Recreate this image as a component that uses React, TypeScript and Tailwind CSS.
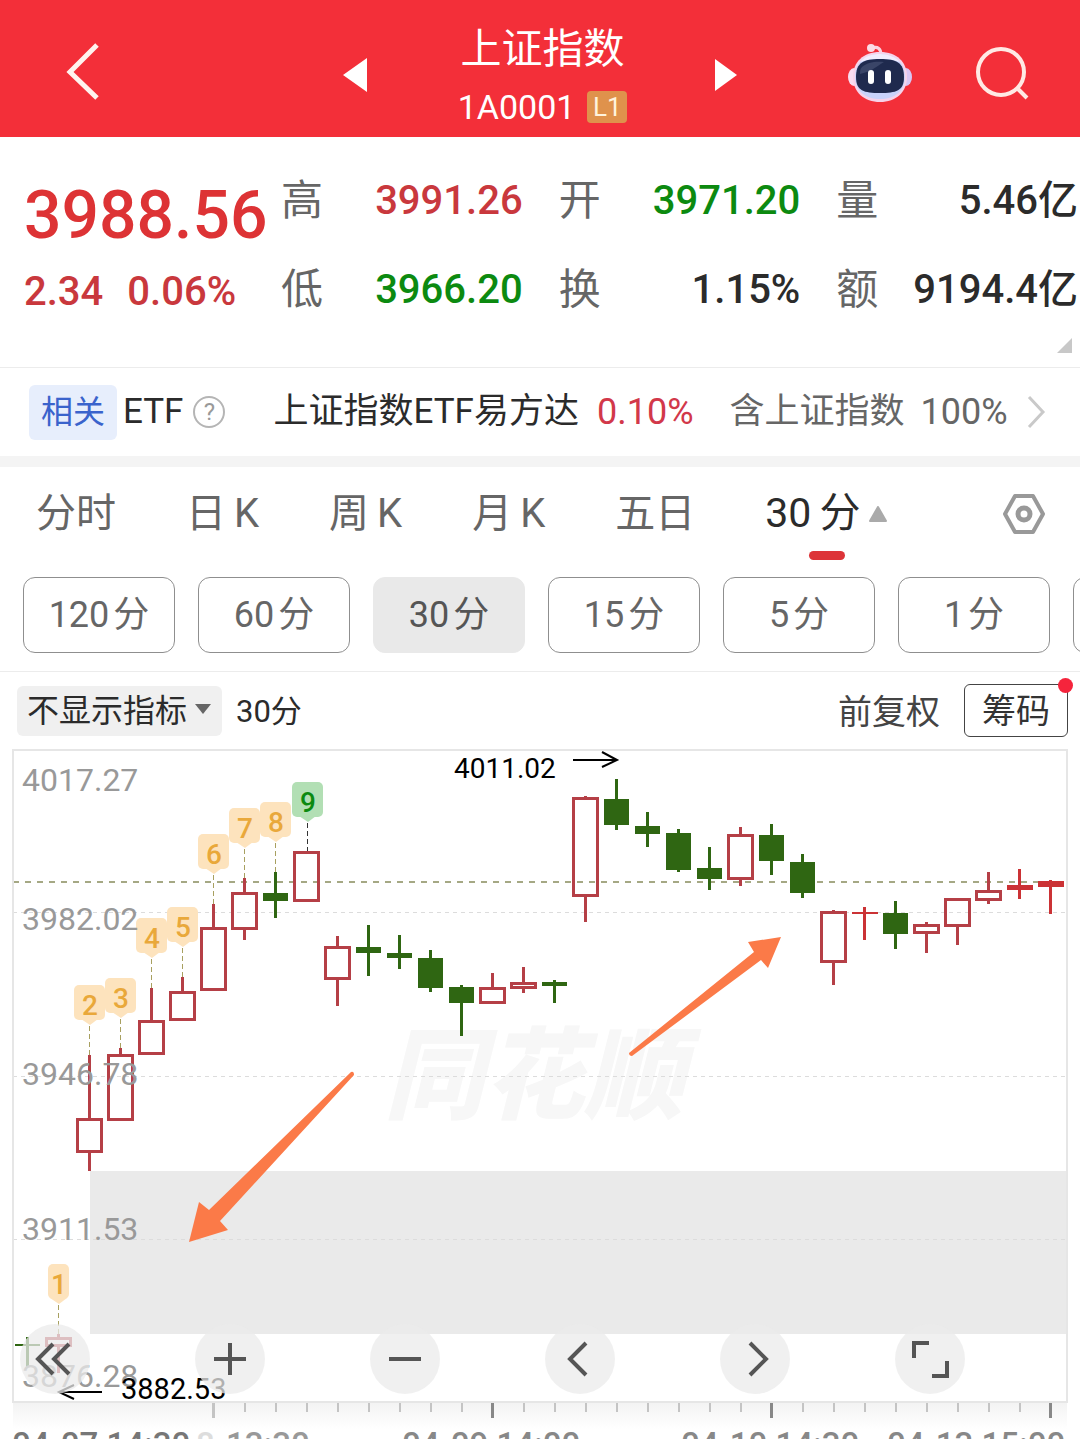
import React, { useState } from 'react';

interface Candle {
  x: number;
  high: number;
  top: number;
  bottom: number;
  low: number;
  kind: 'up' | 'down' | 'flat'; // flat = solid red body
}

interface Marker {
  n: number;
  x: number;
  y: number;
  end: number; // where the dashed leader meets the candle
}

const RED = '#b53f46';
const GREEN = '#2f6612';

const candles: Candle[] = [
  { x: 27, high: 1337, top: 1344, bottom: 1346, low: 1367, kind: 'down' },
  { x: 58, high: 1334, top: 1337, bottom: 1347, low: 1373, kind: 'up' },
  { x: 89, high: 1055, top: 1118, bottom: 1153, low: 1171, kind: 'up' },
  { x: 120, high: 1048, top: 1054, bottom: 1121, low: 1121, kind: 'up' },
  { x: 151, high: 988, top: 1020, bottom: 1055, low: 1055, kind: 'up' },
  { x: 182, high: 977, top: 991, bottom: 1021, low: 1021, kind: 'up' },
  { x: 213, high: 904, top: 927, bottom: 991, low: 991, kind: 'up' },
  { x: 244, high: 878, top: 892, bottom: 930, low: 940, kind: 'up' },
  { x: 275, high: 872, top: 893, bottom: 901, low: 918, kind: 'down' },
  { x: 306, high: 851, top: 851, bottom: 902, low: 902, kind: 'up' },
  { x: 337, high: 936, top: 946, bottom: 980, low: 1006, kind: 'up' },
  { x: 368, high: 925, top: 947, bottom: 953, low: 976, kind: 'down' },
  { x: 399, high: 935, top: 953, bottom: 958, low: 969, kind: 'down' },
  { x: 430, high: 950, top: 958, bottom: 988, low: 992, kind: 'down' },
  { x: 461, high: 985, top: 987, bottom: 1003, low: 1036, kind: 'down' },
  { x: 492, high: 973, top: 987, bottom: 1004, low: 1004, kind: 'up' },
  { x: 523, high: 967, top: 982, bottom: 989, low: 993, kind: 'up' },
  { x: 554, high: 980, top: 982, bottom: 986, low: 1003, kind: 'down' },
  { x: 585, high: 796, top: 797, bottom: 897, low: 922, kind: 'up' },
  { x: 616, high: 779, top: 799, bottom: 825, low: 830, kind: 'down' },
  { x: 647, high: 812, top: 826, bottom: 834, low: 847, kind: 'down' },
  { x: 678, high: 829, top: 833, bottom: 870, low: 872, kind: 'down' },
  { x: 709, high: 847, top: 868, bottom: 879, low: 890, kind: 'down' },
  { x: 740, high: 827, top: 834, bottom: 880, low: 886, kind: 'up' },
  { x: 771, high: 824, top: 835, bottom: 861, low: 875, kind: 'down' },
  { x: 802, high: 854, top: 862, bottom: 893, low: 898, kind: 'down' },
  { x: 833, high: 910, top: 911, bottom: 963, low: 985, kind: 'up' },
  { x: 864, high: 907, top: 912, bottom: 914, low: 940, kind: 'flat' },
  { x: 895, high: 901, top: 913, bottom: 934, low: 949, kind: 'down' },
  { x: 926, high: 922, top: 924, bottom: 934, low: 953, kind: 'up' },
  { x: 957, high: 898, top: 898, bottom: 927, low: 945, kind: 'up' },
  { x: 988, high: 872, top: 890, bottom: 901, low: 904, kind: 'up' },
  { x: 1019, high: 869, top: 885, bottom: 890, low: 899, kind: 'flat' },
  { x: 1050, high: 880, top: 881, bottom: 887, low: 914, kind: 'flat' },
];

const markers: Marker[] = [
  { n: 1, x: 58, y: 1264, end: 1334 },
  { n: 2, x: 89, y: 985, end: 1055 },
  { n: 3, x: 120, y: 978, end: 1048 },
  { n: 4, x: 151, y: 918, end: 988 },
  { n: 5, x: 182, y: 907, end: 977 },
  { n: 6, x: 213, y: 834, end: 904 },
  { n: 7, x: 244, y: 808, end: 878 },
  { n: 8, x: 275, y: 802, end: 872 },
  { n: 9, x: 307, y: 782, end: 851 },
];

const priceLabels = [
  { text: '4017.27', y: 791 },
  { text: '3982.02', y: 930 },
  { text: '3946.78', y: 1085 },
  { text: '3911.53', y: 1240 },
  { text: '3876.28', y: 1387 },
];

const dateLabels = [
  { text: '04-07 14:30', x: 12, color: '#777' },
  { text: '04-09 14:00', x: 402, color: '#888' },
  { text: '04-10 14:30', x: 681, color: '#888' },
  { text: '04-13 15:00', x: 887, color: '#888' },
];

const stats = [
  { label: '高', value: '3991.26', color: 'text-[#c9383d]' },
  { label: '开', value: '3971.20', color: 'text-[#0c8a10]' },
  { label: '量', value: '5.46亿', color: 'text-[#2b2b2b]' },
  { label: '低', value: '3966.20', color: 'text-[#0c8a10]' },
  { label: '换', value: '1.15%', color: 'text-[#2b2b2b]' },
  { label: '额', value: '9194.4亿', color: 'text-[#2b2b2b]' },
];

const tabs = [['分时'], ['日', 'K'], ['周', 'K'], ['月', 'K'], ['五日']];
const periods = ['120', '60', '30', '15', '5', '1'];

const Header: React.FC = () => (
  <header className="grid h-[137px] grid-cols-[1fr_auto_1fr] items-center bg-[#f32f39] px-[51px] text-white">
    <button type="button" aria-label="返回" className="justify-self-start pt-1 pl-[14px]">
      <svg width="36" height="58" viewBox="0 0 36 58" fill="none" stroke="#fff3ee" strokeWidth="5">
        <path d="M32 3 5 30 32 56" />
      </svg>
    </button>
    <div className="flex items-center">
      <button type="button" aria-label="上一个" className="mr-[91px]">
        <svg width="24" height="34" viewBox="0 0 24 34" className="mt-3">
          <path d="M24 0v34L0 17z" fill="#fff" />
        </svg>
      </button>
      <div className="flex flex-col items-center pt-4">
        <h1 className="text-[41px] leading-[60px]">上证指数</h1>
        <div className="flex items-center gap-3 leading-[56px]">
          <span className="text-[34px]">1A0001</span>
          <span className="h-8 w-10 rounded-sm bg-[#df924c] text-center text-[26px] leading-8 text-[#fff3dc]">L1</span>
        </div>
      </div>
      <button type="button" aria-label="下一个" className="ml-[88px]">
        <svg width="22" height="32" viewBox="0 0 22 32" className="mt-3">
          <path d="M0 0v32l22-16z" fill="#fff" />
        </svg>
      </button>
    </div>
    <div className="flex items-center gap-[63px] justify-self-end pt-2">
      <button type="button" aria-label="智能助手">
        <svg width="64" height="60" viewBox="0 0 64 60">
          <path d="M24 5c6-2 9 1 9 7" fill="none" stroke="#fbd3e0" strokeWidth="3" />
          <circle cx="23" cy="5" r="4" fill="#fbdce6" />
          <ellipse cx="6" cy="34" rx="6" ry="9" fill="#f9dcf0" />
          <ellipse cx="58" cy="34" rx="6" ry="9" fill="#d9c6f4" />
          <path d="M32 9c17 0 27 10 27 25S48 59 32 59 5 49 5 34 15 9 32 9z" fill="#f6d3ea" />
          <path d="M32 11c15 0 25 9 25 23S47 56 32 56 7 48 7 34s10-23 25-23z" fill="#c9d3fb" />
          <path d="M12 19c5-6 12-8 20-8s16 3 20 8c-12-4-28-4-40 0z" fill="#f1edfd" />
          <path d="M32 16c17 0 24 4 24 18S48 50 32 50 8 48 8 34s7-18 24-18z" fill="#1f2a4e" />
          <path d="M14 24c5-5 14-6 22-5-8 5-14 10-24 12 0-3 0-5 2-7z" fill="#3a4568" />
          <rect x="20" y="27" width="6" height="14" rx="3" fill="#fff" />
          <rect x="37" y="27" width="6" height="14" rx="3" fill="#fff" />
        </svg>
      </button>
      <button type="button" aria-label="搜索">
        <svg width="54" height="54" viewBox="0 0 54 54" fill="none" stroke="#ffe9e4" strokeWidth="4">
          <circle cx="26" cy="26" r="23" />
          <path d="M43 43l9 9" />
        </svg>
      </button>
    </div>
  </header>
);

const Quote: React.FC = () => (
  <section className="flex h-[231px] flex-col border-b border-[#ececec] pt-[19px]">
    <div className="flex pr-[2px]">
      <div className="w-[281px] shrink-0 pl-6 font-medium">
        <p className="mt-6 text-[66px] leading-[72px] text-[#dd3335]">3988.56</p>
        <p className="mt-5 flex gap-6 text-[40px] leading-10 text-[#c9383d]">
          <span>2.34</span>
          <span>0.06%</span>
        </p>
      </div>
      <dl className="grid flex-1 grid-cols-3 gap-x-9">
        {stats.map((s) => (
          <div key={s.label} className="flex h-[89px] items-center justify-between">
            <dt className="text-[42px] text-[#666]">{s.label}</dt>
            <dd className={`whitespace-nowrap text-[40px] font-medium ${s.color}`}>{s.value}</dd>
          </div>
        ))}
      </dl>
    </div>
    <svg width="15" height="15" viewBox="0 0 15 15" className="mt-1 mr-2 self-end">
      <path d="M15 0v15H0z" fill="#c8c8c8" />
    </svg>
  </section>
);

const RelatedEtf: React.FC = () => (
  <a href="#etf" className="flex h-[88px] items-center pl-[29px] whitespace-nowrap text-[35px] text-[#2b2b2b]">
    <span className="h-[55px] w-[88px] rounded-md bg-[#e7eefc] text-center text-[32px] leading-[55px] text-[#3a63cc]">相关</span>
    <span className="ml-[6px]">ETF</span>
    <span className="ml-[10px] flex h-8 w-8 items-center justify-center rounded-full border-2 border-[#b5b5b5] text-[24px] text-[#999]">?</span>
    <span className="ml-12">上证指数ETF易方达</span>
    <span className="ml-[18px] text-[36px] text-[#d2384a]">0.10%</span>
    <span className="ml-9 text-[#666]">含上证指数</span>
    <span className="ml-4 text-[36px] text-[#666]">100%</span>
    <svg width="20" height="34" viewBox="0 0 20 34" fill="none" stroke="#c9c9c9" strokeWidth="3" className="ml-[18px]">
      <path d="M3 2l14 15L3 32" />
    </svg>
  </a>
);

const PeriodTabs: React.FC = () => {
  const [period, setPeriod] = useState('30');

  return (
    <section className="border-t-[11px] border-[#f4f4f4]">
      <nav className="mb-4 flex h-[94px] items-center pr-[35px] pl-9 text-[40px] text-[#666]">
        <div className="flex h-full gap-[70px]">
          {tabs.map((parts) => (
            <button key={parts.join('')} type="button" className="flex items-center gap-2">
              {parts.map((p) => (
                <span key={p}>{p}</span>
              ))}
            </button>
          ))}
          <button type="button" className="relative flex items-center gap-2 text-[#2b2b2b]">
            <span className="text-[41px]">30</span>
            <span className="text-[41px]">分</span>
            <svg width="20" height="17" viewBox="0 0 20 17">
              <path d="M10 1l8 14H2z" fill="#aaa" stroke="#aaa" strokeWidth="2" strokeLinejoin="round" />
            </svg>
            <span className="absolute bottom-px left-1/2 h-[9px] w-9 -translate-x-1/2 rounded-full bg-[#dd3438]" />
          </button>
        </div>
        <button type="button" aria-label="设置" className="ml-auto">
          <svg width="42" height="42" viewBox="0 0 42 42" fill="none" stroke="#999" strokeWidth="4" strokeLinejoin="round">
            <path d="M12 3h18l10 18-10 18H12L2 21z" />
            <circle cx="21" cy="21" r="6" strokeWidth="5" />
          </svg>
        </button>
      </nav>
      <div className="flex gap-[23px] overflow-hidden border-b border-[#ececec] pb-[18px] pl-[23px] text-[36px] text-[#666]">
        {periods.map((p) => (
          <button
            key={p}
            type="button"
            onClick={() => setPeriod(p)}
            className={`flex h-[76px] w-[152px] shrink-0 items-center justify-center gap-1 rounded-xl border ${
              p === period ? 'border-[#e9e9e9] bg-[#e9e9e9] text-[#555]' : 'border-[#8f8f8f]'
            }`}
          >
            <span>{p}</span>
            <span>分</span>
          </button>
        ))}
        <button type="button" aria-label="更多周期" className="h-[76px] w-[152px] shrink-0 rounded-xl border border-[#8f8f8f]" />
      </div>
    </section>
  );
};

const Toolbar: React.FC = () => (
  <div className="flex h-[76px] items-center pr-3 pl-[17px] text-[34px] text-[#333]">
    <div className="relative">
      <select
        aria-label="指标"
        className="h-[50px] w-[205px] appearance-none rounded-md bg-[#f0f0f0] pl-[10px] text-[32px] leading-[50px] text-[#2b2b2b]"
      >
        <option>不显示指标</option>
      </select>
      <svg width="18" height="12" viewBox="0 0 18 12" className="pointer-events-none absolute top-[18px] right-[10px]">
        <path d="M1 1h16l-8 10z" fill="#666" />
      </svg>
    </div>
    <span className="ml-[14px] pt-1 text-[31px] text-[#2b2b2b]">30分</span>
    <button type="button" className="ml-auto pt-1 text-[#444]">前复权</button>
    <button type="button" className="relative ml-6 h-[53px] w-[104px] rounded-md border border-[#444] leading-[53px]">
      筹码
      <span className="absolute -top-[7px] -right-[6px] h-[15px] w-[15px] rounded-full bg-[#f5243c]" />
    </button>
  </div>
);

const CandleShape: React.FC<{ c: Candle }> = ({ c }) => {
  if (c.kind === 'up') {
    return (
      <g stroke={RED} strokeWidth="3" fill="none">
        <path d={`M${c.x + 0.5} ${c.high}V${c.top + 1}M${c.x + 0.5} ${c.bottom - 1}V${c.low}`} />
        <rect x={c.x - 11.5} y={c.top + 1.5} width="24" height={c.bottom - c.top - 3} />
      </g>
    );
  }
  const color = c.kind === 'down' ? GREEN : '#cb3235';
  return (
    <g fill={color}>
      <rect x={c.x - 1} y={c.high} width="3" height={c.low - c.high} />
      <rect x={c.x - 12} y={c.top} width={c.kind === 'flat' ? 26 : 25} height={c.bottom - c.top} />
    </g>
  );
};

const MarkerShape: React.FC<{ m: Marker }> = ({ m }) => {
  const half = m.n === 1 ? 10 : 15;
  const last = m.n === 9;
  return (
    <g>
      <path d={`M${m.x + 0.5} ${m.y + 41}V${m.end}`} stroke={last ? '#333' : '#a8a060'} strokeDasharray="5 3" />
      <rect x={m.x - half} y={m.y} width={half * 2 + 1} height="35" rx="5" fill={last ? '#b2dfb4' : '#fde3bd'} />
      <path d={`M${m.x - 8} ${m.y + 34}h17l-8 6z`} fill={last ? '#b2dfb4' : '#fde3bd'} />
      <text x={m.x + 1} y={m.y + 30} textAnchor="middle" fontSize="28" fontWeight="500" fill={last ? '#0c8a10' : '#e9a83a'}>
        {m.n}
      </text>
    </g>
  );
};

const ticks = Array.from({ length: 28 }, (_, i) => ({ x: 213 + i * 31, major: i % 9 === 0 }));

const Chart: React.FC = () => (
  <svg viewBox="0 748 1080 691" className="block w-full" role="img" aria-label="30分钟K线">
    <defs>
      <linearGradient id="axisFade" x1="0" y1="0" x2="0" y2="1">
        <stop offset="0" stopColor="#f3f3f3" />
        <stop offset="1" stopColor="#ffffff" />
      </linearGradient>
    </defs>

    <text x="384" y="1111" fontSize="100" fontWeight="900" fontStyle="italic" fill="#f7f7f7">同花顺</text>

    <rect x="90" y="1171" width="977" height="163" fill="#eaeaea" />
    <path d="M13 912.5H1067M13 1076.5H1067M13 1239.5H1067" stroke="#dcdcdc" strokeDasharray="4 4" />
    <path d="M13 882H1067" stroke="#a5a884" strokeWidth="2" strokeDasharray="6 6" />
    <rect x="13" y="750" width="1054" height="652" fill="none" stroke="#e6e6e6" strokeWidth="2" />

    {markers.map((m) => (
      <MarkerShape key={m.n} m={m} />
    ))}
    {candles.map((c) => (
      <CandleShape key={c.x} c={c} />
    ))}

    <g fontSize="32" fill="#999">
      {priceLabels.map((l) => (
        <text key={l.text} x="22" y={l.y}>
          {l.text}
        </text>
      ))}
    </g>

    {/* high / low callouts */}
    <g fontSize="29" fill="#000">
      <text x="454" y="778" fontSize="28">4011.02</text>
      <text x="121" y="1399">3882.53</text>
    </g>
    <g fill="none" stroke="#000" strokeWidth="2">
      <path d="M573 760H616M602 752l15 8-15 7" />
      <path d="M102 1392H60M74 1385l-15 7 15 7" />
    </g>

    <g fill="#fb7a48">
      <path d="M351 1072q3-1 3 3L220 1221l8 9-39 12 10-40 10 8z" />
      <path d="M629 1053q0 3 3 3L761 960l7 8 13-31-33 5 6 10z" />
    </g>

    {/* time axis */}
    <rect x="13" y="1403" width="1054" height="26" fill="url(#axisFade)" />
    {ticks.map((t) => (
      <rect
        key={t.x}
        x={t.major ? t.x - 1 : t.x}
        y="1403"
        width={t.major ? 3 : 2}
        height={t.major ? 15 : 9}
        fill={t.major && t.x > 213 ? '#888' : '#c4c4c4'}
      />
    ))}
    <g fontSize="33" fontWeight="500">
      <text x="196" y="1456" fill="#ddd">8</text>
      <text x="226" y="1456" fill="#999">13:30</text>
      {dateLabels.map((d) => (
        <text key={d.text} x={d.x} y="1456" fill={d.color}>
          {d.text}
        </text>
      ))}
    </g>
  </svg>
);

const controls = [
  { label: '最早', d: 'M33 20 18 35 33 50M49 20 34 35 49 50' },
  { label: '放大', d: 'M19 35H51M35 19V51' },
  { label: '缩小', d: 'M19 35H51' },
  { label: '左移', d: 'M41 19 25 35 41 51' },
  { label: '右移', d: 'M30 19 46 35 30 51' },
  { label: '全屏', d: 'M19 34V19H34M37 52H52V37' },
];

const ChartControls: React.FC = () => (
  <div className="absolute bottom-[45px] left-5 flex gap-[105px]">
    {controls.map((c) => (
      <button key={c.label} type="button" aria-label={c.label} className="h-[70px] w-[70px] rounded-full bg-[#ebebeb]/75">
        <svg viewBox="0 0 70 70" fill="none" stroke="#555" strokeWidth="4">
          <path d={c.d} />
        </svg>
      </button>
    ))}
  </div>
);

const App: React.FC = () => {
  return (
    <main className="overflow-hidden bg-white font-['Roboto','Noto_Sans_CJK_SC',sans-serif]">
      <Header />
      <Quote />
      <RelatedEtf />
      <PeriodTabs />
      <Toolbar />
      <div className="relative">
        <Chart />
        <ChartControls />
      </div>
    </main>
  );
};

export default App;
